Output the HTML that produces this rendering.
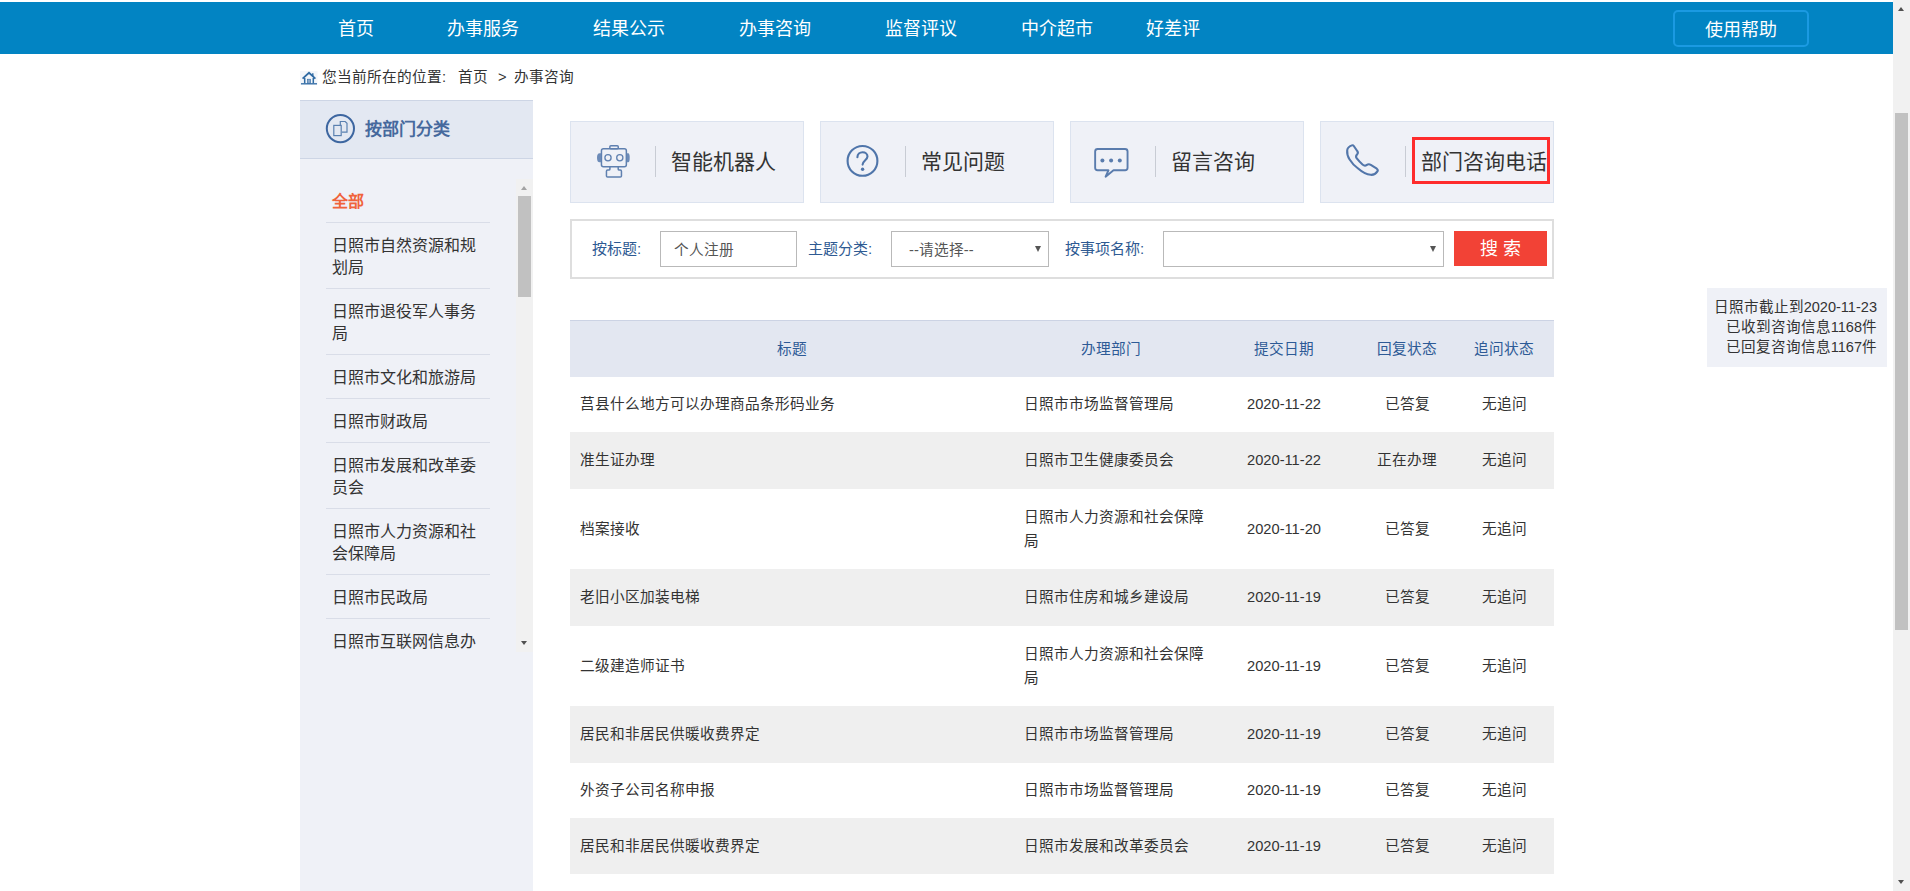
<!DOCTYPE html>
<html lang="zh-CN">
<head>
<meta charset="utf-8">
<style>
*{margin:0;padding:0;box-sizing:border-box;}
html,body{width:1910px;height:891px;overflow:hidden;background:#fff;}
body{position:relative;font-family:"Liberation Sans",sans-serif;color:#333;}
.a{position:absolute;white-space:nowrap;}
#hdr{position:absolute;left:0;top:2px;width:1893px;height:52px;background:#0284c3;}
.nav{position:absolute;top:1px;height:52px;line-height:52px;font-size:18px;color:#fff;white-space:nowrap;}
#help{position:absolute;left:1673px;top:8px;width:136px;height:37px;border:2px solid #1b9ae2;border-radius:5px;color:#fff;font-size:18px;line-height:37px;text-align:center;}
.bc{position:absolute;top:67px;height:20px;line-height:20px;font-size:14.67px;color:#333;white-space:nowrap;}
#side{position:absolute;left:300px;top:100px;width:233px;height:791px;background:#eff1f7;}
#sideh{position:absolute;left:0;top:0;width:233px;height:59px;background:#e3e8f2;border-top:1px solid #cdd5e5;border-bottom:1px solid #cdd5e5;}
.si{position:absolute;left:26px;width:164px;border-bottom:1px solid #d9dde8;font-size:16px;line-height:22px;padding-left:6px;color:#333;white-space:normal;}
.card{position:absolute;top:121px;width:234px;height:82px;background:#eff1f7;border:1px solid #dce3ef;}
.card .dv{position:absolute;left:84px;top:24px;width:1px;height:31px;background:#c8ccd4;}
.card .tx{position:absolute;left:100px;top:0;height:80px;line-height:80px;font-size:21px;color:#333;white-space:nowrap;}
.card svg{position:absolute;left:0;top:0;}
#search{position:absolute;left:570px;top:219px;width:984px;height:60px;border:2px solid #dedede;}
.lb{position:absolute;top:239px;height:20px;line-height:20px;font-size:15px;color:#2e5a92;white-space:nowrap;}
.inp{position:absolute;top:231px;height:36px;border:1px solid #b9b9b9;background:#fff;}
.inp .t{position:absolute;top:1px;line-height:35px;font-size:14.67px;color:#555;white-space:nowrap;}
.arr{position:absolute;width:0;height:0;border-left:3.5px solid transparent;border-right:3.5px solid transparent;border-top:6px solid #555;}
#btn{position:absolute;left:1454px;top:231px;width:93px;height:35px;background:#f24236;color:#fff;font-size:18px;line-height:37px;text-align:center;white-space:pre;}
table{position:absolute;left:570px;top:320px;width:984px;border-collapse:collapse;table-layout:fixed;font-size:14.67px;}
th{background:#e3e7f1;color:#2d5a96;font-weight:normal;border-top:1px solid #ccd3e4;line-height:24px;padding:0;}
td{color:#333;line-height:24px;padding:0 10px;vertical-align:middle;}
td.c{text-align:center;padding:0;}
td.d{padding-right:0;}
tr.g td{background:#efefef;}
#stat{position:absolute;left:1707px;top:288px;width:180px;height:79px;background:#eff1f7;font-size:14.55px;line-height:20px;text-align:right;padding:9px 10px 0 0;color:#333;}
#vs{position:absolute;left:1893px;top:0;width:17px;height:891px;background:#f1f1f1;}
</style>
</head>
<body>
<div id="hdr">
  <div class="nav" style="left:338px">首页</div>
  <div class="nav" style="left:447px">办事服务</div>
  <div class="nav" style="left:593px">结果公示</div>
  <div class="nav" style="left:739px">办事咨询</div>
  <div class="nav" style="left:885px">监督评议</div>
  <div class="nav" style="left:1021px">中介超市</div>
  <div class="nav" style="left:1146px">好差评</div>
  <div id="help">使用帮助</div>
</div>

<!-- breadcrumb -->
<svg class="a" style="left:300px;top:70px" width="18" height="15" viewBox="0 0 18 15">
  <rect x="0" y="1" width="17.5" height="14" fill="#f3f6fa"/>
  <path d="M2.6 8.6 L9 2.8 L15.4 8.6" fill="none" stroke="#2f6aa3" stroke-width="1.8"/>
  <path d="M12.8 3.2 V6.2" stroke="#2f6aa3" stroke-width="1.4"/>
  <path d="M4.7 8 V13.2 M13.3 8 V13.2" fill="none" stroke="#2f6aa3" stroke-width="1.5"/>
  <rect x="7.4" y="9.2" width="3.2" height="4" fill="#8aa7c9" stroke="#2f6aa3" stroke-width="0.6"/>
  <path d="M1 13.8 H17" stroke="#2f6aa3" stroke-width="1.3"/>
</svg>
<div class="bc" style="left:322px">您当前所在的位置:</div>
<div class="bc" style="left:458px">首页</div>
<div class="bc" style="left:498px">&gt;</div>
<div class="bc" style="left:514px">办事咨询</div>

<!-- sidebar -->
<div id="side">
  <div id="sideh">
    <svg class="a" style="left:24px;top:12px" width="34" height="34" viewBox="0 0 34 34">
      <circle cx="16.4" cy="15.6" r="13.6" fill="none" stroke="#3d66a0" stroke-width="2"/>
      <path d="M16.3 12.5 V8.5 H21.2 L23 10.3 V19.2 H18" fill="none" stroke="#5a80b0" stroke-width="1.2"/>
      <rect x="9.8" y="12.4" width="7.4" height="10.2" fill="none" stroke="#5a80b0" stroke-width="1.2"/>
    </svg>
    <div class="a" style="left:65px;top:17px;font-size:17px;line-height:24px;font-weight:bold;color:#46699d">按部门分类</div>
  </div>
  <div class="si" style="top:79px;height:44px;padding-top:12px;color:#f0633b;font-weight:bold">全部</div>
  <div class="si" style="top:123px;height:66px;padding-top:12px">日照市自然资源和规划局</div>
  <div class="si" style="top:189px;height:66px;padding-top:12px">日照市退役军人事务局</div>
  <div class="si" style="top:255px;height:44px;padding-top:12px">日照市文化和旅游局</div>
  <div class="si" style="top:299px;height:44px;padding-top:12px">日照市财政局</div>
  <div class="si" style="top:343px;height:66px;padding-top:12px">日照市发展和改革委员会</div>
  <div class="si" style="top:409px;height:66px;padding-top:12px">日照市人力资源和社会保障局</div>
  <div class="si" style="top:475px;height:44px;padding-top:12px">日照市民政局</div>
  <div class="si" style="top:519px;height:44px;padding-top:12px;border-bottom:none">日照市互联网信息办</div>
  <div class="a" style="left:216px;top:79px;width:17px;height:473px;background:#f1f1f1"></div>
  <div class="arr" style="left:221px;top:86px;border-top:none;border-bottom:4px solid #a3a3a3;border-left-width:3.5px;border-right-width:3.5px"></div>
  <div class="a" style="left:218px;top:96px;width:13px;height:101px;background:#c1c1c1"></div>
  <div class="arr" style="left:221px;top:541px;border-top:4px solid #505050;border-left-width:3.5px;border-right-width:3.5px"></div>
</div>

<!-- cards -->
<div class="card" style="left:570px">
  <svg width="232" height="80" viewBox="0 0 232 80">
    <g fill="none" stroke="#5f80b0" stroke-width="1.5" stroke-linejoin="round">
      <rect x="38.85" y="23.65" width="8.4" height="3.1" rx="1"/>
      <rect x="30.45" y="26.75" width="24.9" height="17.9" rx="2"/>
      <circle cx="37" cy="35.8" r="3.1" stroke-width="1.3"/>
      <circle cx="48.8" cy="35.8" r="3.1" stroke-width="1.3"/>
      <path d="M38.9 44.65 V47.2 Q38.9 48.1 37.7 48.1 H36.6 Q35.45 48.1 35.45 49.3 V54 Q35.45 54.95 36.6 54.95 H49.3 Q50.45 54.95 50.45 54 V49.3 Q50.45 48.1 49.3 48.1 H48.4 Q47.2 48.1 47.2 47.2 V44.65"/>
    </g>
    <path d="M30 31.2 H28.6 Q26 31.2 26 35.7 Q26 40.2 28.6 40.2 H30 Z" fill="#6c8bb8"/>
    <path d="M55.8 31.2 H57.2 Q58.7 31.2 58.7 35.7 Q58.7 40.2 57.2 40.2 H55.8 Z" fill="#6c8bb8"/>
  </svg>
  <div class="dv"></div>
  <div class="tx">智能机器人</div>
</div>
<div class="card" style="left:820px">
  <svg width="232" height="80" viewBox="0 0 232 80">
    <g fill="none" stroke="#4f75aa" stroke-width="2.1" stroke-linecap="round">
      <circle cx="41.5" cy="38.9" r="14.9"/>
      <path d="M36.4 35.2 C36.4 32.2 38.8 30.2 41.6 30.2 C44.4 30.2 46.5 32 46.5 34.6 C46.5 37.8 41.6 38.8 41.6 42.6"/>
    </g>
    <circle cx="41.6" cy="47.3" r="1.7" fill="#4f75aa"/>
  </svg>
  <div class="dv"></div>
  <div class="tx">常见问题</div>
</div>
<div class="card" style="left:1070px">
  <svg width="232" height="80" viewBox="0 0 232 80">
    <path d="M26.65 27.05 H54.05 Q56.55 27.05 56.55 29.55 V45.75 Q56.55 48.25 54.05 48.25 H42.5 L34.6 54.7 L37.5 48.25 H26.65 Q24.15 48.25 24.15 45.75 V29.55 Q24.15 27.05 26.65 27.05 Z" fill="none" stroke="#5a7cad" stroke-width="1.9" stroke-linejoin="round"/>
    <circle cx="31.4" cy="38.4" r="2" fill="#5a7cad"/>
    <circle cx="40.1" cy="38.4" r="2" fill="#5a7cad"/>
    <circle cx="48.8" cy="38.4" r="2" fill="#5a7cad"/>
  </svg>
  <div class="dv"></div>
  <div class="tx">留言咨询</div>
</div>
<div class="card" style="left:1320px">
  <svg width="232" height="80" viewBox="0 0 232 80">
    <path d="M30.87 23.38 C28.8 24.2 26.4 25.8 26.2 28.3 C25.9 31.5 27 35 28.63 37.5 C30.5 40.5 33 43.5 36.5 46 C40.5 49.5 45.5 52.5 49.7 52.8 C52 53 55 51.5 56.4 49.4 C57 48.5 56.8 47.5 55.8 46.7 L49.8 42.8 C48.2 41.9 46.6 42.3 45.5 43.1 C44.3 44 43 43.8 41.5 42.5 C39 40.3 37 38 35.6 36.2 C34.8 35 35.2 33.3 36.2 32.3 C37 31.4 36.9 29.9 36.2 29 L32.8 24 C32.3 23.3 31.6 23.1 30.87 23.38 Z" fill="none" stroke="#5276aa" stroke-width="2.1" stroke-linejoin="round"/>
  </svg>
  <div class="dv"></div>
  <div class="tx">部门咨询电话</div>
</div>
<div class="a" style="left:1412px;top:137px;width:138px;height:47px;border:3px solid #fe2c2c"></div>

<!-- search -->
<div id="search"></div>
<div class="lb" style="left:592px">按标题:</div>
<div class="inp" style="left:660px;width:137px"><div class="t" style="left:13px">个人注册</div></div>
<div class="lb" style="left:808px">主题分类:</div>
<div class="inp" style="left:891px;width:158px"><div class="t" style="left:17px">--请选择--</div><div class="arr" style="left:143px;top:14px"></div></div>
<div class="lb" style="left:1065px">按事项名称:</div>
<div class="inp" style="left:1163px;width:281px"><div class="arr" style="left:266px;top:14px"></div></div>
<div id="btn">搜 索</div>

<!-- table -->
<table>
  <colgroup><col style="width:444px"><col style="width:194px"><col style="width:152px"><col style="width:94px"><col style="width:100px"></colgroup>
  <tr style="height:56px"><th>标题</th><th>办理部门</th><th>提交日期</th><th>回复状态</th><th>追问状态</th></tr>
  <tr style="height:55px"><td>莒县什么地方可以办理商品条形码业务</td><td class="d">日照市市场监督管理局</td><td class="c">2020-11-22</td><td class="c">已答复</td><td class="c">无追问</td></tr>
  <tr class="g" style="height:57px"><td>准生证办理</td><td class="d">日照市卫生健康委员会</td><td class="c">2020-11-22</td><td class="c">正在办理</td><td class="c">无追问</td></tr>
  <tr style="height:80px"><td>档案接收</td><td class="d">日照市人力资源和社会保障局</td><td class="c">2020-11-20</td><td class="c">已答复</td><td class="c">无追问</td></tr>
  <tr class="g" style="height:57px"><td>老旧小区加装电梯</td><td class="d">日照市住房和城乡建设局</td><td class="c">2020-11-19</td><td class="c">已答复</td><td class="c">无追问</td></tr>
  <tr style="height:80px"><td>二级建造师证书</td><td class="d">日照市人力资源和社会保障局</td><td class="c">2020-11-19</td><td class="c">已答复</td><td class="c">无追问</td></tr>
  <tr class="g" style="height:57px"><td>居民和非居民供暖收费界定</td><td class="d">日照市市场监督管理局</td><td class="c">2020-11-19</td><td class="c">已答复</td><td class="c">无追问</td></tr>
  <tr style="height:55px"><td>外资子公司名称申报</td><td class="d">日照市市场监督管理局</td><td class="c">2020-11-19</td><td class="c">已答复</td><td class="c">无追问</td></tr>
  <tr class="g" style="height:56px"><td>居民和非居民供暖收费界定</td><td class="d">日照市发展和改革委员会</td><td class="c">2020-11-19</td><td class="c">已答复</td><td class="c">无追问</td></tr>
</table>

<div id="stat">日照市截止到2020-11-23<br>已收到咨询信息1168件<br>已回复咨询信息1167件</div>

<!-- page scrollbar -->
<div id="vs">
  <div class="arr" style="left:5px;top:7px;border-top:none;border-bottom:4px solid #505050;border-left-width:3.5px;border-right-width:3.5px"></div>
  <div class="a" style="left:2px;top:113px;width:13px;height:517px;background:#c1c1c1"></div>
  <div class="arr" style="left:5px;top:880px;border-top:4px solid #505050;border-left-width:3.5px;border-right-width:3.5px"></div>
</div>
</body>
</html>
